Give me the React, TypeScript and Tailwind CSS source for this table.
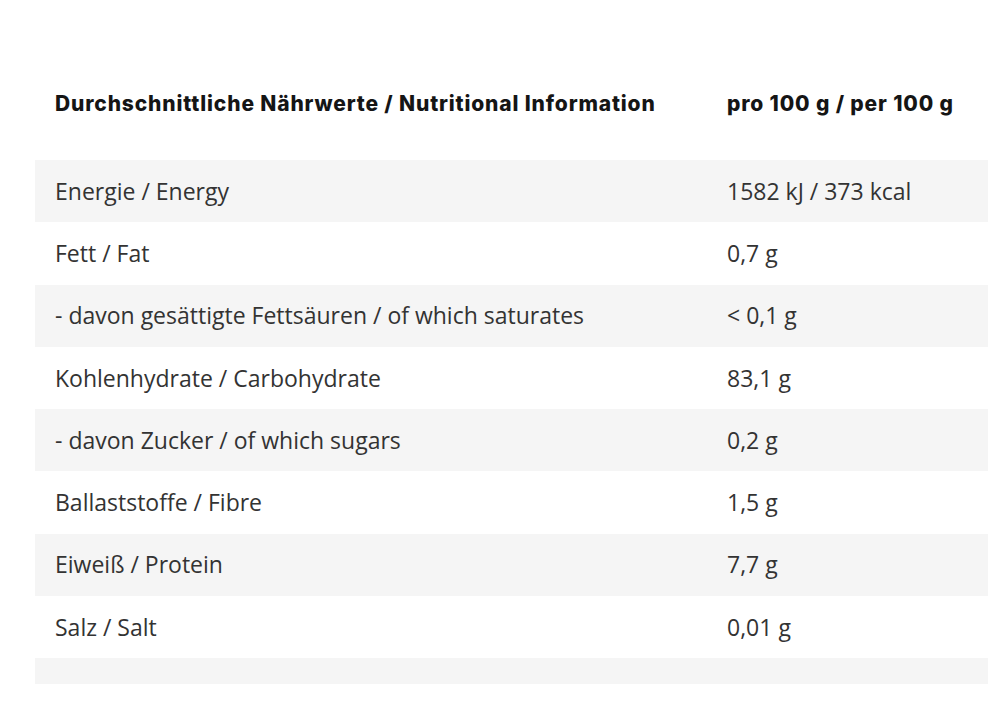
const rows: [string, string][] = [
  ["Energie / Energy", "1582 kJ / 373 kcal"],
  ["Fett / Fat", "0,7 g"],
  ["- davon gesättigte Fettsäuren / of which saturates", "< 0,1 g"],
  ["Kohlenhydrate / Carbohydrate", "83,1 g"],
  ["- davon Zucker / of which sugars", "0,2 g"],
  ["Ballaststoffe / Fibre", "1,5 g"],
  ["Eiweiß / Protein", "7,7 g"],
  ["Salz / Salt", "0,01 g"],
];

export default function App() {
  return (
    <div className="w-[1005px] h-[723px] bg-white overflow-hidden">
      <div className="ml-[35px] w-[953px] pt-[73px]">
        {/* Header */}
        <div className="flex items-center h-[62px] mb-[25px] font-['Inter',sans-serif] font-extrabold text-[21px] text-[#151515] tracking-[0.85px]">
          <div className="w-[692px] pl-5 whitespace-nowrap">Durchschnittliche Nährwerte / Nutritional Information</div>
          <div className="whitespace-nowrap">pro 100 g / per 100 g</div>
        </div>

        {/* Rows */}
        <div className="font-['Open_Sans',sans-serif] text-[23px] text-[#333]">
          {rows.map(([label, value], i) => (
            <div
              key={label}
              className={`flex items-center h-[62.25px] ${i % 2 === 0 ? "bg-[#f5f5f5]" : "bg-white"}`}
            >
              <div className="w-[692px] pl-5">{label}</div>
              <div>{value}</div>
            </div>
          ))}
          <div className="h-[26px] bg-[#f5f5f5]" />
        </div>
      </div>
    </div>
  );
}
